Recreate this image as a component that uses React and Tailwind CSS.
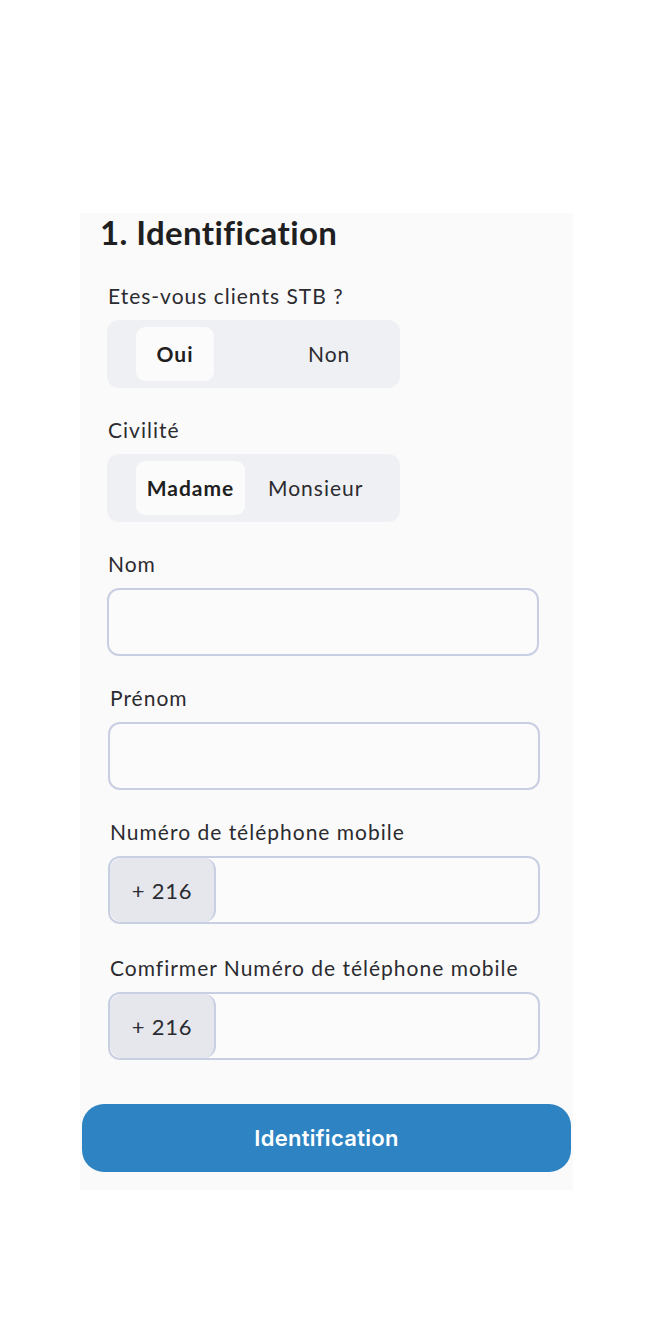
export default function App() {
  const font = { fontFamily: 'Lato, "Open Sans", sans-serif' };
  const Label = ({ children, className = "" }) => (
    <div className={`h-[28px] text-[21px] leading-[28px] tracking-[1px] text-[#2b2b30] ${className}`}>{children}</div>
  );
  const Phone = () => (
    <div className="mt-[10px] flex h-[68px] w-[432px] overflow-hidden rounded-[12px] border-2 border-[#c9cfe2] bg-[#fbfbfc]">
      <div className="flex w-[106px] items-center justify-center rounded-[12px] border-r-2 border-[#c9cfe2] bg-[#e5e7ec] text-[22px] tracking-[0.8px] text-[#2b2b30]">
        + 216
      </div>
      <div className="flex-1" />
    </div>
  );
  return (
    <div className="min-h-[1326px] w-[656px] bg-white" style={font}>
      <div className="h-[213px]" />
      <div className="ml-[80px] flex h-[977px] w-[493px] flex-col bg-[#fafafa]">
        <div className="-mt-[2px] pl-[20px] pt-[1px] text-[33px] font-bold leading-[40px] tracking-[0.4px] text-[#1f1f22]">1. Identification</div>
        <div className="pl-[27px] pt-[30px]">
          <Label className="pl-[1px]">Etes-vous clients STB ?</Label>
          <div className="mt-[10px] flex h-[68px] w-[293px] items-center rounded-[12px] bg-[#eef0f4] pl-[29px]">
            <div className="flex h-[54px] w-[78px] items-center justify-center rounded-[9px] bg-[#fbfbfc] text-[21px] font-bold tracking-[1px] text-[#1f1f22]">Oui</div>
            <div className="ml-[94px] text-[21px] tracking-[1px] text-[#2b2b30]">Non</div>
          </div>

          <Label className="mt-[28px] pl-[1px]">Civilité</Label>
          <div className="mt-[10px] flex h-[68px] w-[293px] items-center rounded-[12px] bg-[#eef0f4] pl-[29px]">
            <div className="flex h-[54px] w-[109px] items-center justify-center rounded-[9px] bg-[#fbfbfc] text-[21px] font-bold tracking-[1px] text-[#1f1f22]">Madame</div>
            <div className="ml-[23px] text-[21px] tracking-[1px] text-[#2b2b30]">Monsieur</div>
          </div>

          <Label className="mt-[28px] pl-[1px]">Nom</Label>
          <div className="mt-[10px] h-[68px] w-[432px] rounded-[12px] border-2 border-[#c9cfe2] bg-[#fbfbfc]" />

          <div className="pl-[1px]">
            <Label className="mt-[28px] pl-[2px]">Prénom</Label>
            <div className="mt-[10px] h-[68px] w-[432px] rounded-[12px] border-2 border-[#c9cfe2] bg-[#fbfbfc]" />

            <Label className="mt-[28px] pl-[2px]">Numéro de téléphone mobile</Label>
            <Phone />

            <Label className="mt-[30px] pl-[2px]">Comfirmer Numéro de téléphone mobile</Label>
            <Phone />
          </div>
        </div>
        <div className="mx-[2px] mt-[44px] flex h-[68px] items-center justify-center rounded-[22px] bg-[#2e84c2] text-[22px] font-semibold tracking-[0.3px] text-white" style={{ fontFamily: 'Inter, "Open Sans", sans-serif' }}>
          Identification
        </div>
      </div>
    </div>
  );
}
